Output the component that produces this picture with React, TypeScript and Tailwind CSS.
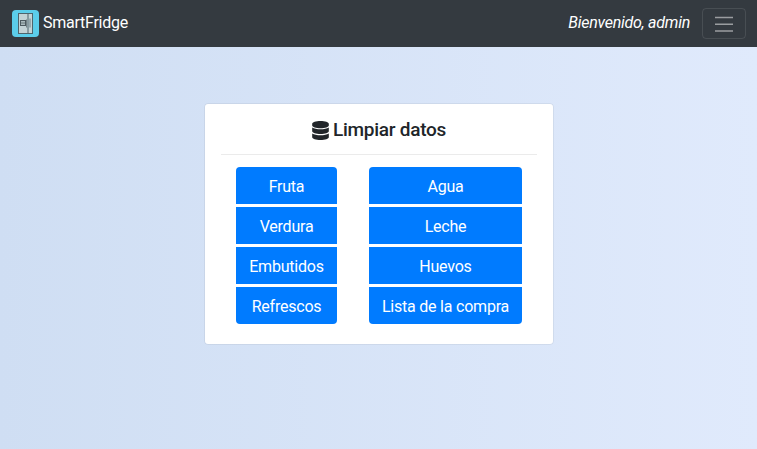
import { FaDatabase } from "react-icons/fa";

const food = ["Fruta", "Verdura", "Embutidos", "Refrescos"];
const other = ["Agua", "Leche", "Huevos", "Lista de la compra"];

function FridgeLogo() {
  return (
    <svg className="h-[27px] w-[27px]" viewBox="0 0 27 27" fill="none">
      <rect width="27" height="27" rx="4" fill="#5bcdea" />
      <rect x="6.5" y="3.5" width="14" height="20" fill="#c3d3d6" stroke="#4d656d" />
      <path d="M16 3.5v20" stroke="#4d656d" />
      <path d="M18 8.5v9" stroke="#6b8087" />
      <rect x="8.5" y="10.5" width="5" height="5" fill="#a9babd" stroke="#4d5b60" />
      <path d="M8.5 13h5M14.5 9.5v8" stroke="#4d5b60" strokeWidth=".7" />
    </svg>
  );
}

function ButtonGroup({ labels, width }: { labels: string[]; width: string }) {
  return (
    <div className={`flex flex-col gap-[3px] overflow-hidden rounded ${width}`}>
      {labels.map((label) => (
        <button key={label} className="h-[37px] whitespace-nowrap bg-[#007bff] pt-[2px] pl-px text-center text-base tracking-[-0.22px] text-white">
          {label}
        </button>
      ))}
    </div>
  );
}

export default function App() {
  return (
    <div className="flex h-[449px] w-[757px] flex-col items-center overflow-hidden bg-linear-to-r/srgb from-[#cfdef3] to-[#e0eafc] font-[Roboto,sans-serif] text-base tracking-[-0.25px] text-[#212529]">
      <nav className="flex h-[47px] w-full shrink-0 items-center bg-[#343a40] pr-[11px] pl-3 text-white">
        <FridgeLogo />
        <span className="ml-[4px] pb-px">SmartFridge</span>
        <span className="ml-auto pb-[2px] italic">Bienvenido, admin</span>
        <button aria-label="Menú" className="ml-3 flex h-[31px] w-[44px] items-center justify-center rounded border border-white/10">
          <svg className="h-4 w-5" viewBox="0 0 20 16" stroke="#9a9da0" strokeWidth="1.4">
            <path d="M1 1.5h18M1 8.25h18M1 15h18" />
          </svg>
        </button>
      </nav>
      <main className="mt-[57px] h-[240px] w-[348px] rounded-[3px] bg-white px-4 outline outline-black/5">
        <h1 className="flex h-[51px] items-center justify-center gap-[4px] border-b border-black/8 pt-[3px] pl-px text-[19px] font-medium">
          <FaDatabase className="h-[19px] w-[17px]" />
          Limpiar datos
        </h1>
        <div className="mt-3 flex gap-8 pl-[15px]">
          <ButtonGroup labels={food} width="w-[101px]" />
          <ButtonGroup labels={other} width="w-[153px]" />
        </div>
      </main>
    </div>
  );
}
